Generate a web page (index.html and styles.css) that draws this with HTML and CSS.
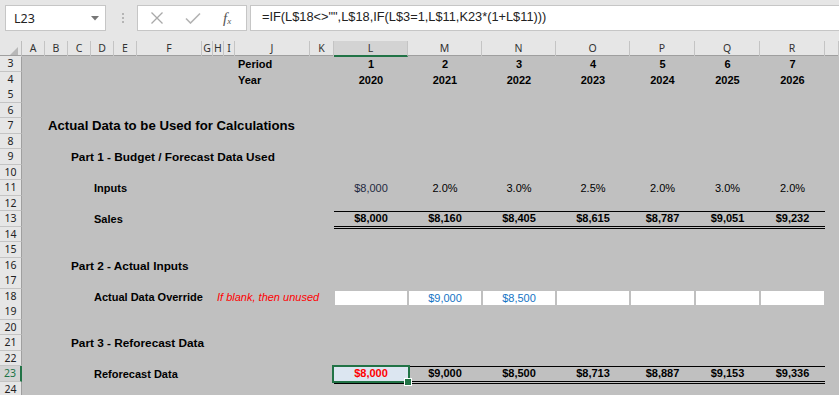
FILE: index.html
```html
<!DOCTYPE html>
<html lang="en">
<head>
    <meta charset="UTF-8">
    <title>Reforecast - Excel</title>
    <link rel="stylesheet" href="styles.css">
</head>
<body>
    <div class="formula-bar">
        <div class="name-box">
            <span>L23</span>
            <svg class="drop" width="8" height="5" viewBox="0 0 8 5"><path d="M0 0h8L4 4.5z" fill="#777"/></svg>
        </div>
        <div class="grip"><i></i><i></i><i></i></div>
        <div class="fx-buttons">
            <svg width="14" height="12" viewBox="0 0 14 12"><path d="M1.5 0.5l11 11M12.5 0.5l-11 11" stroke="#a9a9a9" stroke-width="1.3" fill="none"/></svg>
            <svg width="16" height="12" viewBox="0 0 16 12"><path d="M1 6.5l4.5 4.5L15 1.5" stroke="#b3b3b3" stroke-width="1.6" fill="none"/></svg>
            <span class="fx">f<sub>x</sub></span>
        </div>
        <div class="formula">=IF(L$18&lt;&gt;"",L$18,IF(L$3=1,L$11,K23*(1+L$11)))</div>
    </div>

    <div class="sheet">
        <div class="row col-headers">
            <div class="corner"></div>
            <div class="ch">A</div>
            <div class="ch">B</div>
            <div class="ch">C</div>
            <div class="ch">D</div>
            <div class="ch">E</div>
            <div class="ch">F</div>
            <div class="ch">G</div>
            <div class="ch">H</div>
            <div class="ch">I</div>
            <div class="ch">J</div>
            <div class="ch">K</div>
            <div class="ch sel">L</div>
            <div class="ch">M</div>
            <div class="ch">N</div>
            <div class="ch">O</div>
            <div class="ch">P</div>
            <div class="ch">Q</div>
            <div class="ch">R</div>
            <div class="ch"></div>
        </div>

        <div class="rows">
            <div class="row">
                <div class="rh">3</div>
                <div class="label in-j">Period</div>
                <div class="vals bold">
                    <span>1</span><span>2</span><span>3</span><span>4</span><span>5</span><span>6</span><span>7</span>
                </div>
            </div>
            <div class="row">
                <div class="rh">4</div>
                <div class="label in-j">Year</div>
                <div class="vals bold">
                    <span>2020</span><span>2021</span><span>2022</span><span>2023</span><span>2024</span><span>2025</span><span>2026</span>
                </div>
            </div>
            <div class="row"><div class="rh">5</div></div>
            <div class="row"><div class="rh">6</div></div>
            <div class="row">
                <div class="rh">7</div>
                <div class="label in-b title">Actual Data to be Used for Calculations</div>
            </div>
            <div class="row"><div class="rh">8</div></div>
            <div class="row">
                <div class="rh">9</div>
                <div class="label in-c part">Part 1 - Budget / Forecast Data Used</div>
            </div>
            <div class="row"><div class="rh">10</div></div>
            <div class="row">
                <div class="rh">11</div>
                <div class="label in-d">Inputs</div>
                <div class="vals">
                    <span class="base">$8,000</span><span>2.0%</span><span>3.0%</span><span>2.5%</span><span>2.0%</span><span>3.0%</span><span>2.0%</span>
                </div>
            </div>
            <div class="row"><div class="rh">12</div></div>
            <div class="row">
                <div class="rh">13</div>
                <div class="label in-d">Sales</div>
                <div class="vals bold total">
                    <span>$8,000</span><span>$8,160</span><span>$8,405</span><span>$8,615</span><span>$8,787</span><span>$9,051</span><span>$9,232</span>
                </div>
            </div>
            <div class="row"><div class="rh">14</div></div>
            <div class="row"><div class="rh">15</div></div>
            <div class="row">
                <div class="rh">16</div>
                <div class="label in-c part">Part 2 - Actual Inputs</div>
            </div>
            <div class="row"><div class="rh">17</div></div>
            <div class="row">
                <div class="rh">18</div>
                <div class="label in-d short">Actual Data Override</div>
                <div class="note">If blank, then unused</div>
                <div class="vals inputs">
                    <span></span><span>$9,000</span><span>$8,500</span><span></span><span></span><span></span><span></span>
                </div>
            </div>
            <div class="row"><div class="rh">19</div></div>
            <div class="row"><div class="rh">20</div></div>
            <div class="row">
                <div class="rh">21</div>
                <div class="label in-c part">Part 3 - Reforecast Data</div>
            </div>
            <div class="row"><div class="rh">22</div></div>
            <div class="row">
                <div class="rh sel">23</div>
                <div class="label in-d">Reforecast Data</div>
                <div class="vals bold total">
                    <span class="cur">$8,000</span><span>$9,000</span><span>$8,500</span><span>$8,713</span><span>$8,887</span><span>$9,153</span><span>$9,336</span>
                </div>
            </div>
            <div class="row"><div class="rh">24</div></div>
        </div>
    </div>
</body>
</html>
```

FILE: styles.css
```css
* {
    margin: 0;
    padding: 0;
    box-sizing: border-box;
}

body {
    width: 839px;
    height: 395px;
    overflow: hidden;
    background: #e6e6e6;
    font-family: 'Liberation Sans', Arial, sans-serif;
}

/* formula bar */

.formula-bar {
    display: flex;
    align-items: flex-start;
    height: 41px;
    padding: 5px 0 0 5px;
    font-family: 'Noto Sans', sans-serif;
}

.name-box {
    display: flex;
    align-items: center;
    justify-content: space-between;
    width: 101px;
    height: 26px;
    padding: 0 6px 0 8px;
    background: #fff;
    border: 1px solid #c6c6c6;
    font-size: 12.5px;
    color: #222;
}

.grip {
    display: flex;
    flex-direction: column;
    gap: 2px;
    width: 31px;
    padding: 8px 0 0 16px;
}

.grip i {
    width: 2px;
    height: 2px;
    background: #b5b5b5;
}

.fx-buttons {
    display: flex;
    align-items: center;
    width: 110px;
    height: 26px;
    padding: 0 0 0 12px;
    background: #fff;
    border: 1px solid #c6c6c6;
    gap: 21px;
}

.fx {
    font-family: 'Liberation Serif', serif;
    font-style: italic;
    font-size: 15px;
    color: #555;
    margin-left: 1px;
}

.fx sub {
    font-size: 9px;
    vertical-align: -1px;
}

.formula {
    flex: 1;
    height: 26px;
    margin-left: 3px;
    padding: 3px 0 0 11px;
    background: #fff;
    border: 1px solid #c6c6c6;
    border-right: none;
    font-family: 'Liberation Sans', sans-serif;
    font-size: 12.8px;
    color: #222;
    white-space: nowrap;
}

/* sheet */

.sheet {
    --cols: 22px 23px 23px 23px 23px 23px 65px 11px 11px 11px 75px 24px 74px 74px 74px 74px 65px 65px 65px 1fr;
    background: #c0c0c0;
    height: 354px;
}

.row {
    display: grid;
    grid-template-columns: var(--cols);
    height: 16px;
    font-size: 11px;
    color: #000;
}

.rows .row:nth-child(even) {
    height: 15px;
}

.col-headers {
    background: #e6e6e6;
    border-bottom: 1px solid #9f9f9f;
    height: 15px;
}

.corner {
    position: relative;
    border-right: 1px solid #bdbdbd;
}

.corner::after {
    content: '';
    position: absolute;
    right: 3px;
    bottom: 2px;
    border-left: 8px solid transparent;
    border-bottom: 8px solid #b8b8b8;
}

.ch {
    border-right: 1px solid #c4c4c4;
    font-family: 'Noto Sans', sans-serif;
    font-size: 10.5px;
    line-height: 14px;
    color: #333;
    text-align: center;
}

.ch.sel {
    background: #d3d3d3;
    border-bottom: 2px solid #217346;
}

.rh {
    background: #e6e6e6;
    border-right: 1px solid #9f9f9f;
    border-bottom: 1px solid #c4c4c4;
    font-family: 'Noto Sans', sans-serif;
    font-size: 10.5px;
    line-height: 14px;
    color: #222;
    text-align: center;
}

.rh.sel {
    background: #d3d3d3;
    border-right: 2px solid #217346;
    color: #217346;
}

.label {
    padding-left: 3px;
    font-weight: bold;
    white-space: nowrap;
    line-height: 16px;
}

.in-b { grid-column: 3 / 13; }
.in-c { grid-column: 4 / 13; }
.in-d { grid-column: 5 / 13; }
.in-j { grid-column: 11 / 13; }
.in-d.short { grid-column: 5 / 9; }

.title {
    font-size: 13.2px;
}

.part {
    font-size: 11.8px;
}

.note {
    grid-column: 9 / 13;
    padding-left: 4px;
    font-style: italic;
    color: #ff0000;
    white-space: nowrap;
    line-height: 16px;
}

.vals {
    grid-column: 13 / 20;
    display: grid;
    grid-template-columns: 74px 74px 74px 74px 65px 65px 65px;
}

.vals span {
    text-align: center;
    line-height: 16px;
    white-space: nowrap;
}

.bold {
    font-weight: bold;
}

.base {
    color: #1f2940;
}

.total {
    border-top: 1px solid #000;
    border-bottom: 3px double #000;
    margin-bottom: -2px;
}

.total span {
    line-height: 13px;
}

.inputs span {
    margin: 2px 1px 0;
    background: #fff;
    color: #1474c4;
    line-height: 14px;
}

.cur {
    position: relative;
    background: #dce6f1;
    color: #ff0000;
    outline: 2px solid #217346;
    outline-offset: 0;
}

.cur::after {
    content: '';
    position: absolute;
    right: -4px;
    bottom: -5px;
    width: 6px;
    height: 6px;
    background: #217346;
    border: 1px solid #fff;
}
```
